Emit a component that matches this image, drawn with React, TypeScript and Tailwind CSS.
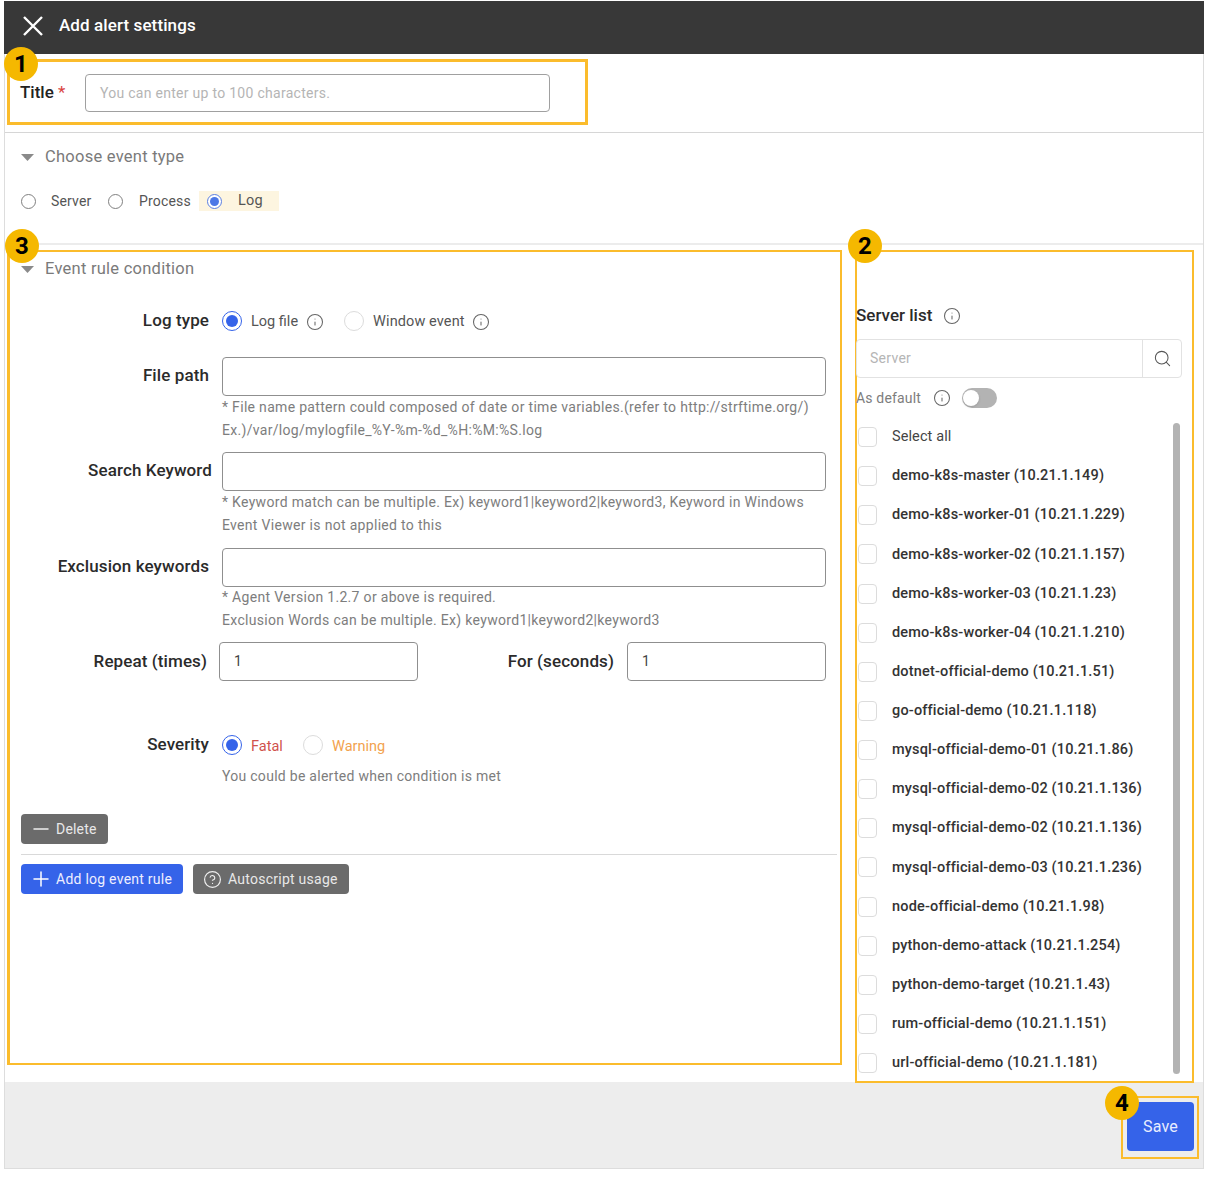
import React from "react";
import { Info, Search, Minus, Plus, CircleHelp } from "lucide-react";

const Badge = ({ n, className }: { n: string; className: string }) => (
  <div className={"absolute z-10 w-[34px] h-[34px] rounded-full bg-[#f5b800] flex items-center justify-center text-[24px] font-bold text-black leading-none " + className}>
    {n}
  </div>
);

const Tri = () => (
  <svg width="13" height="7" viewBox="0 0 13 7" className="shrink-0">
    <path d="M0 0H13L6.5 7Z" fill="#8a8a8a" />
  </svg>
);

const Radio = ({ on, faint }: { on?: boolean; faint?: boolean }) =>
  on ? (
    <span className="w-[20px] h-[20px] rounded-full border border-[#3563e9] bg-white flex items-center justify-center shrink-0">
      <span className="w-[12px] h-[12px] rounded-full bg-[#3563e9]" />
    </span>
  ) : (
    <span className={"block w-[20px] h-[20px] rounded-full border bg-white shrink-0 " + (faint ? "border-[#dcdcdc]" : "border-[#8c8c8c]")} />
  );

const SmallRadio = ({ on }: { on?: boolean }) => (
  <span className={"w-[15px] h-[15px] rounded-full border flex items-center justify-center shrink-0 " + (on ? "border-[#5b7fe0] bg-white" : "border-[#808080] bg-white")}>
    {on && <span className="w-[9px] h-[9px] rounded-full bg-[#4d78e6]" />}
  </span>
);

const Label = ({ children, w = "w-[188px]" }: { children: React.ReactNode; w?: string }) => (
  <div className={"text-[17px] font-medium text-[#2b2b2b] text-right tracking-[0.1px] whitespace-nowrap shrink-0 " + w}>{children}</div>
);

const Field = () => <div className="h-[39px] w-[604px] rounded-[4px] border border-[#8f8f8f] bg-white" />;

const Help = ({ a, b }: { a: string; b: string }) => (
  <div className="text-[14px] leading-[23px] text-[#7d7d7d] tracking-[0.31px] whitespace-nowrap mt-[-1px]">
    <div>{a}</div>
    <div>{b}</div>
  </div>
);

const servers = [
  "demo-k8s-master (10.21.1.149)",
  "demo-k8s-worker-01 (10.21.1.229)",
  "demo-k8s-worker-02 (10.21.1.157)",
  "demo-k8s-worker-03 (10.21.1.23)",
  "demo-k8s-worker-04 (10.21.1.210)",
  "dotnet-official-demo (10.21.1.51)",
  "go-official-demo (10.21.1.118)",
  "mysql-official-demo-01 (10.21.1.86)",
  "mysql-official-demo-02 (10.21.1.136)",
  "mysql-official-demo-02 (10.21.1.136)",
  "mysql-official-demo-03 (10.21.1.236)",
  "node-official-demo (10.21.1.98)",
  "python-demo-attack (10.21.1.254)",
  "python-demo-target (10.21.1.43)",
  "rum-official-demo (10.21.1.151)",
  "url-official-demo (10.21.1.181)",
];

const Check = () => <span className="w-[19px] h-[20px] rounded-[4px] border border-[#dcdcdc] bg-white shrink-0" />;

export default function App() {
  return (
    <div className="w-[1208px] h-[1177px] bg-white pt-px pl-[4px] pr-[4px] pb-[8px] font-['Roboto',sans-serif] overflow-hidden">
      <div className="relative w-[1200px] h-[1168px] border-x border-[#dddddd] flex flex-col">
        {/* header */}
        <div className="h-[53px] bg-[#383838] flex items-center pl-[19px] pb-[3px] shrink-0 -mx-px">
          <svg width="20" height="20" viewBox="0 0 20 20" className="mr-[16px]">
            <path d="M1 1L19 19M19 1L1 19" stroke="#ffffff" strokeWidth="2.4" fill="none" />
          </svg>
          <span className="text-white text-[17px] font-medium tracking-[0.1px]">Add alert settings</span>
        </div>

        {/* title */}
        <div className="h-[79px] border-b border-[#d6d6d6] pt-[5px] pl-[2px] shrink-0">
          <div className="relative w-[581px] h-[66px] border-[3px] border-[#fbbc2c] flex items-center pl-[10px]">
            <Badge n="1" className="left-[-6px] top-[-15px]" />
            <span className="text-[17px] font-medium text-[#222] w-[65px] mt-[1px]">
              Title <span className="text-[#d9433f] font-normal">*</span>
            </span>
            <div className="w-[465px] h-[38px] mt-[2px] rounded-[4px] border border-[#a0a0a0] flex items-center pl-[14px] text-[14px] text-[#b5b5b5] tracking-[0.28px]">
              You can enter up to 100 characters.
            </div>
          </div>
        </div>

        {/* event type */}
        <div className="h-[112px] border-b-2 border-[#ececec] pl-[16px] shrink-0">
          <div className="flex items-center h-[48px] gap-[11px]">
            <Tri />
            <span className="text-[16.5px] text-[#7a7a7a] tracking-[0.25px]">Choose event type</span>
          </div>
          <div className="flex items-center mt-[8px] text-[14px] text-[#555] tracking-[0.17px] h-[24px]">
            <SmallRadio />
            <span className="ml-[15px] w-[42px]">Server</span>
            <span className="ml-[15px]"><SmallRadio /></span>
            <span className="ml-[16px] w-[53px]">Process</span>
            <div className="ml-[7px] h-[20px] w-[80px] bg-[#fdf5e0] flex items-center pl-[8px]">
              <SmallRadio on />
              <span className="ml-[16px] text-[14.5px]">Log</span>
            </div>
          </div>
        </div>

        {/* main */}
        <div className="flex flex-1 min-h-0 pl-[2px] pt-[5px]">
          <div className="relative w-[835px] h-[815px] border-2 border-l-[3px] border-[#fbbc2c] pl-[11px] pr-[4px]">
            <Badge n="3" className="left-[-5px] top-[-23px]" />
            <div className="flex items-center gap-[11px] h-[34px]">
              <Tri />
              <span className="text-[16.5px] text-[#7a7a7a] tracking-[0.25px]">Event rule condition</span>
            </div>

            <div className="flex items-center h-[20px] mt-[25px]">
              <Label>Log type</Label>
              <div className="ml-[13px] flex items-center text-[14.5px] text-[#555]">
                <Radio on />
                <span className="ml-[9px] mt-[2px]">Log file</span>
                <Info size={18} color="#666" strokeWidth={1.4} className="ml-[8px] mt-[2px]" />
                <span className="ml-[20px]"><Radio faint /></span>
                <span className="ml-[9px] mt-[2px] tracking-[0.1px]">Window event</span>
                <Info size={18} color="#666" strokeWidth={1.4} className="ml-[7px] mt-[2px]" />
              </div>
            </div>

            <div className="flex items-center mt-[26px]">
              <Label w="w-[188px] -mt-[2px]">File path</Label>
              <div className="ml-[13px]"><Field /></div>
            </div>
            <div className="ml-[201px] pt-[1px]">
              <Help a="* File name pattern could composed of date or time variables.(refer to http://strftime.org/)" b="Ex.)/var/log/mylogfile_%Y-%m-%d_%H:%M:%S.log" />
            </div>

            <div className="flex items-center mt-[10px]">
              <Label w="w-[191px] mr-[10px] -mt-[2px]">Search Keyword</Label>
              <Field />
            </div>
            <div className="ml-[201px] pt-[1px]">
              <Help a="* Keyword match can be multiple. Ex) keyword1|keyword2|keyword3, Keyword in Windows" b="Event Viewer is not applied to this" />
            </div>

            <div className="flex items-center mt-[11px]">
              <Label w="w-[188px] -mt-[2px]">Exclusion keywords</Label>
              <div className="ml-[13px]"><Field /></div>
            </div>
            <div className="ml-[201px]">
              <Help a="* Agent Version 1.2.7 or above is required." b="Exclusion Words can be multiple. Ex) keyword1|keyword2|keyword3" />
            </div>

            <div className="flex items-center mt-[10px]">
              <Label w="w-[186px]">Repeat (times)</Label>
              <div className="ml-[12px] w-[199px] h-[39px] rounded-[4px] border border-[#8f8f8f] flex items-center pl-[14px] text-[14px] text-[#444]">1</div>
              <div className="w-[196px] text-right shrink-0"><span className="text-[17px] font-medium tracking-[0.1px] text-[#2b2b2b]">For (seconds)</span></div>
              <div className="ml-[13px] w-[199px] h-[39px] rounded-[4px] border border-[#8f8f8f] flex items-center pl-[14px] text-[14px] text-[#444]">1</div>
            </div>

            <div className="flex items-center h-[20px] mt-[54px]">
              <Label>Severity</Label>
              <div className="ml-[13px] flex items-center text-[14.5px]">
                <Radio on />
                <span className="ml-[9px] mt-[3px] w-[32px] text-[#d0524c]">Fatal</span>
                <span className="ml-[20px]"><Radio faint /></span>
                <span className="ml-[9px] mt-[3px] text-[#f2a24e]">Warning</span>
              </div>
            </div>
            <div className="ml-[201px] mt-[11px] text-[14px] text-[#7d7d7d] tracking-[0.28px] leading-[20px]">You could be alerted when condition is met</div>

            <div className="mt-[28px] w-[87px] h-[30px] rounded-[4px] bg-[#6b6b6b] flex items-center pl-[8px] text-[14px] text-[#e8e8e8] tracking-[0.2px]">
              <Minus size={24} color="#eee" strokeWidth={1.5} className="mr-[3px]" />Delete
            </div>
            <div className="mt-[10px] border-t border-[#d9d9d9] -mr-[1px]" />
            <div className="mt-[9px] flex gap-[10px]">
              <div className="w-[162px] h-[30px] rounded-[4px] bg-[#3563e9] flex items-center pl-[8px] text-[14px] text-[#eef] tracking-[0.25px]">
                <Plus size={24} color="#fff" strokeWidth={1.5} className="mr-[3px]" />Add log event rule
              </div>
              <div className="w-[156px] h-[30px] rounded-[4px] bg-[#6b6b6b] flex items-center pl-[10px] text-[14px] text-[#e8e8e8] tracking-[0.25px]">
                <CircleHelp size={19} color="#eee" strokeWidth={1.5} className="mr-[6px]" />Autoscript usage
              </div>
            </div>
          </div>

          {/* right */}
          <div className="relative ml-[13px] w-[339px] h-[833px] border-[2px] border-[#fbbc2c] -mb-px">
            <Badge n="2" className="left-[-9px] top-[-23px]" />
            <div className="flex items-center h-[20px] mt-[54px] -ml-px">
              <span className="text-[17px] font-medium text-[#2b2b2b]">Server list</span>
              <Info size={18} color="#666" strokeWidth={1.4} className="ml-[11px]" />
            </div>
            <div className="mt-[13px] -ml-px w-[326px] h-[39px] rounded-[4px] border border-[#e2e2e2] flex">
              <div className="flex-1 flex items-center pl-[13px] text-[14px] text-[#b5b5b5] tracking-[0.28px]">Server</div>
              <div className="w-[39px] border-l border-[#e2e2e2] flex items-center justify-center">
                <Search size={19} color="#555" strokeWidth={1.3} />
              </div>
            </div>
            <div className="flex items-center h-[20px] mt-[10px] -ml-px text-[14px] text-[#7d7d7d] tracking-[0.17px]">
              As default
              <Info size={18} color="#666" strokeWidth={1.4} className="ml-[12px]" />
              <span className="ml-[11px] w-[35px] h-[20px] rounded-full bg-[#b3b3b3] flex items-center pl-[1px]">
                <span className="w-[16px] h-[16px] rounded-full bg-white shadow" />
              </span>
            </div>
            <div className="flex mt-[15px]">
              <div className="w-[316px] pl-[1px] overflow-hidden">
                <div className="flex items-center h-[20px] mt-[4px]">
                  <Check />
                  <span className="ml-[15px] text-[14.5px] text-[#444] tracking-[0.1px]">Select all</span>
                </div>
                {servers.map((s, i) => (
                  <div key={i} className="flex items-center h-[20px] mt-[19.13px]">
                    <Check />
                    <span className="ml-[15px] text-[14.5px] font-medium text-[#333] tracking-[0.17px] whitespace-nowrap">{s}</span>
                  </div>
                ))}
              </div>
              <div className="w-[7px] h-[651px] rounded-full bg-[#b3b3b3]" />
            </div>
          </div>
        </div>

        {/* footer */}
        <div className="h-[87px] bg-[#ededed] border-b border-[#dddddd] shrink-0 flex justify-end pt-[14px] pr-[4px]">
          <div className="relative w-[78px] h-[63px] border-[2px] border-[#fbbc2c] p-[4px]">
            <Badge n="4" className="left-[-18px] top-[-12px]" />
            <div className="w-[67px] h-[49px] rounded-[4px] bg-[#3563e9] flex items-center justify-center text-[16px] text-[#e8edff] tracking-[0.2px]">Save</div>
          </div>
        </div>
      </div>
    </div>
  );
}
